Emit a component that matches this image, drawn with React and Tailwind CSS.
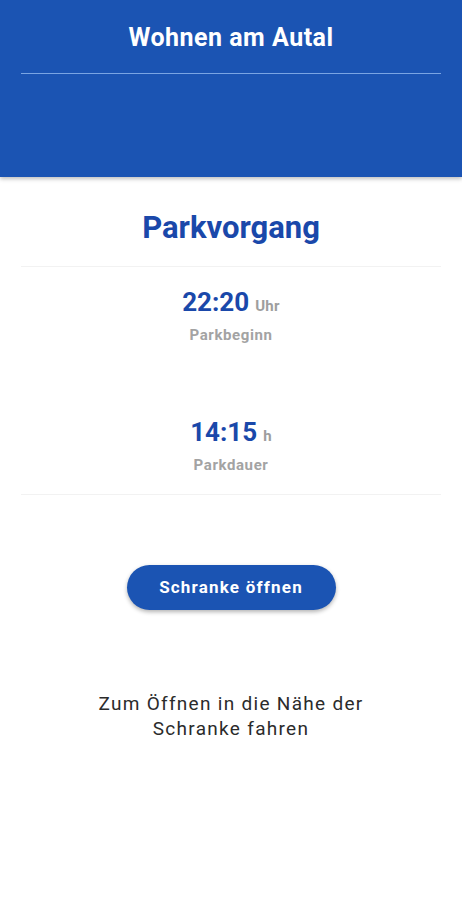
import React from 'react';

function TimeBlock({ value, unit, label }) {
    return (
        <div className="flex flex-col items-center">
            <div className="flex h-[30px] items-baseline gap-[6px]">
                <span className="text-[26px] font-bold leading-[30px] text-[#1a48aa]">{value}</span>
                <span className="text-[15px] font-bold tracking-[0.3px] text-[#9e9e9e]">{unit}</span>
            </div>
            <div className="mt-[8px] text-[15px] font-bold leading-[20px] tracking-[0.6px] text-[#a3a3a3]">{label}</div>
        </div>
    );
}

export default function App() {
    return (
        <div className="min-h-[900px] bg-white font-['Roboto',sans-serif]">
            <header className="h-[177px] bg-[#1b54b3] px-[21px] shadow-[0_2px_4px_rgba(0,0,0,0.25)]">
                <h1 className="pt-[23px] text-center text-[25px] font-bold leading-[30px] tracking-[0.5px] text-white">Wohnen am Autal</h1>
                <div className="mt-[20px] h-px bg-[#7aa5e3]" />
            </header>

            <main className="px-[21px]">
                <h2 className="mt-[33px] text-center text-[31px] font-bold leading-[36px] text-[#1a48aa]">Parkvorgang</h2>
                <div className="mt-[20px] h-px bg-[#f2f2f2]" />

                <div className="mt-[20px]">
                    <TimeBlock value="22:20" unit="Uhr" label="Parkbeginn" />
                </div>
                <div className="mt-[72px]">
                    <TimeBlock value="14:15" unit="h" label="Parkdauer" />
                </div>
                <div className="mt-[19px] h-px bg-[#f2f2f2]" />

                <div className="mt-[70px] flex justify-center">
                    <button className="h-[45px] w-[209px] rounded-full bg-[#1b54b3] text-[17px] font-bold tracking-[1.2px] text-white shadow-[0_2px_4px_rgba(0,0,0,0.3)]">
                        Schranke öffnen
                    </button>
                </div>

                <p className="mt-[81px] text-center text-[19px] leading-[25px] tracking-[1.3px] text-[#2b2b2b]">
                    Zum Öffnen in die Nähe der<br />Schranke fahren
                </p>
            </main>
        </div>
    );
}
